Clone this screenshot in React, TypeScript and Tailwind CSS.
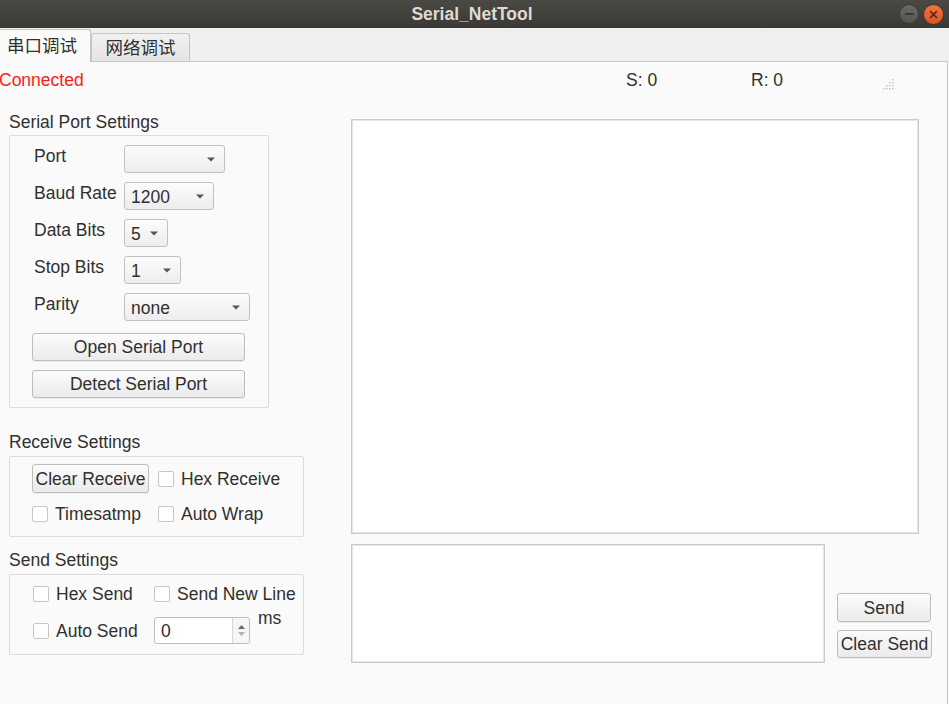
import React from 'react';

const font = "font-['Liberation_Sans','Noto_Sans_CJK_SC',sans-serif]";

function Arrow() {
  return (
    <svg width="8" height="5" viewBox="0 0 8 5">
      <path d="M0 0.5h8L4 4.5z" fill="#555555" />
    </svg>
  );
}

function Combo({ value, className }: { value?: string; className: string }) {
  return (
    <div
      className={`h-[28px] rounded-[3px] border border-[#c1c1c1] bg-gradient-to-b from-[#fcfcfc] to-[#ededed] flex items-center justify-between pl-[6px] pr-[9px] shrink-0 ${className}`}
    >
      <span className="leading-[22px] pt-[2px]">{value}</span>
      <Arrow />
    </div>
  );
}

function Btn({ label, className }: { label: string; className: string }) {
  return (
    <div
      className={`rounded-[3px] border border-[#bdbdbd] bg-gradient-to-b from-[#fbfbfb] to-[#ebebeb] flex items-center justify-center whitespace-nowrap leading-[22px] shadow-[0_1px_0_rgba(0,0,0,0.06)] ${className}`}
    >
      {label}
    </div>
  );
}

function Check({ label }: { label: string }) {
  return (
    <div className="flex items-center h-[22px] whitespace-nowrap">
      <div className="w-[16px] h-[16px] rounded-[2px] border border-[#c6c6c6] bg-white shrink-0" />
      <span className="ml-[7px] leading-[22px]">{label}</span>
    </div>
  );
}

function Row({ label, children }: { label: string; children: React.ReactNode }) {
  return (
    <div className="flex items-start">
      <span className="w-[90px] leading-[22px] whitespace-nowrap">{label}</span>
      {children}
    </div>
  );
}

function SizeGrip() {
  const dots: [number, number][] = [
    [9, 0],
    [9, 3], [6, 3],
    [9, 6], [6, 6], [3, 6],
    [9, 9], [6, 9], [3, 9], [0, 9],
  ];
  return (
    <svg width="11" height="11" viewBox="0 0 11 11">
      {dots.map(([x, y], i) => (
        <rect key={i} x={x} y={y} width="1.5" height="1.5" fill="#c2c2c2" />
      ))}
    </svg>
  );
}

export default function App() {
  return (
    <div className={`w-[949px] h-[704px] overflow-hidden flex flex-col bg-[#fafafa] text-[17.5px] text-[#303030] ${font}`}>
      {/* TITLE BAR */}
      <div className="h-[28px] shrink-0 bg-gradient-to-b from-[#4a4944] to-[#3a3935] flex items-center">
        <div className="flex-1" />
        <span className="font-bold text-[#dfdbd2] leading-[22px]">Serial_NetTool</span>
        <div className="flex-1 flex justify-end items-center gap-[4px] pr-[5px]">
          <div className="w-[20px] h-[20px] rounded-full bg-gradient-to-b from-[#6a6964] to-[#55544f] border border-[#3a3935] flex items-center justify-center">
            <div className="w-[9px] h-[2px] bg-[#3b3a36] rounded-full" />
          </div>
          <div className="w-[21px] h-[21px] rounded-full bg-gradient-to-b from-[#f3733f] to-[#e0501c] border border-[#3a3935] flex items-center justify-center">
            <svg width="9" height="9" viewBox="0 0 9 9">
              <path d="M1.5 1.5l6 6M7.5 1.5l-6 6" stroke="#4a2a1a" strokeWidth="1.6" strokeLinecap="round" />
            </svg>
          </div>
        </div>
      </div>

      {/* TABS */}
      <div className="h-[33px] shrink-0 bg-[#efefef] flex items-end relative z-10">
        <div className="w-[91px] h-[33px] -mb-px bg-[#fafafa] border-t border-r border-[#c4c4c4] rounded-tr-[3px] flex items-center pl-[7px] pb-[1px] leading-[22px]">
          串口调试
        </div>
        <div className="w-[99px] h-[28px] bg-gradient-to-b from-[#f1f1f1] to-[#e4e4e4] border border-b-0 border-[#c4c4c4] rounded-t-[3px] flex items-center justify-center leading-[22px]">
          网络调试
        </div>
      </div>

      {/* CONTENT PANE */}
      <div className="flex-1 w-[948px] border-t border-r border-[#c8c8c8] flex flex-col">
        <div className="h-[36px] flex items-center">
          <span className="w-[627px] -ml-[1px] text-[#ff1a1a] leading-[22px]">Connected</span>
          <span className="w-[125px] leading-[22px]">S: 0</span>
          <span className="w-[132px] leading-[22px]">R: 0</span>
          <div className="mt-[8px]">
            <SizeGrip />
          </div>
        </div>

        <div className="flex">
          {/* LEFT COLUMN */}
          <div className="w-[351px] shrink-0 pl-[9px] pt-[13px] flex flex-col">
            <span className="leading-[22px]">Serial Port Settings</span>
            <div className="mt-[2px] w-[260px] border border-[#dcdcdc] rounded-[2px] pt-[9px] pb-[9px] pl-[24px] flex flex-col gap-[9px]">
              <Row label="Port">
                <Combo className="w-[101px]" />
              </Row>
              <Row label="Baud Rate">
                <Combo value="1200" className="w-[90px]" />
              </Row>
              <Row label="Data Bits">
                <Combo value="5" className="w-[44px]" />
              </Row>
              <Row label="Stop Bits">
                <Combo value="1" className="w-[57px]" />
              </Row>
              <Row label="Parity">
                <Combo value="none" className="w-[126px]" />
              </Row>
              <div className="mt-[3px] -ml-[2px] flex flex-col gap-[9px]">
                <Btn label="Open Serial Port" className="w-[213px] h-[28px]" />
                <Btn label="Detect Serial Port" className="w-[213px] h-[28px]" />
              </div>
            </div>

            <span className="mt-[23px] leading-[22px]">Receive Settings</span>
            <div className="mt-[3px] w-[295px] border border-[#dcdcdc] rounded-[2px] pt-[7px] pb-[11px] pl-[22px] grid grid-cols-[126px_auto] items-center gap-y-[10px]">
              <Btn label="Clear Receive" className="w-[117px] h-[29px]" />
              <Check label="Hex Receive" />
              <Check label="Timesatmp" />
              <Check label="Auto Wrap" />
            </div>

            <span className="mt-[12px] leading-[22px]">Send Settings</span>
            <div className="mt-[3px] w-[295px] border border-[#dcdcdc] rounded-[2px] pt-[8px] pb-[10px] pl-[23px] grid grid-cols-[121px_auto] items-center gap-y-[12px]">
              <Check label="Hex Send" />
              <Check label="Send New Line" />
              <Check label="Auto Send" />
              <div className="flex items-start">
                <div className="w-[96px] h-[27px] rounded-[3px] border border-[#bdbdbd] bg-white flex">
                  <span className="flex-1 pl-[6px] leading-[25px] pt-[1px]">0</span>
                  <div className="w-[17px] border-l border-[#d6d6d6] bg-[#f6f6f6] rounded-r-[3px] flex flex-col items-center justify-center gap-[3px]">
                    <svg width="7" height="4" viewBox="0 0 7 4">
                      <path d="M0 4h7L3.5 0z" fill="#6a6a6a" />
                    </svg>
                    <svg width="7" height="4" viewBox="0 0 7 4">
                      <path d="M0 0h7L3.5 4z" fill="#b0b0b0" />
                    </svg>
                  </div>
                </div>
                <span className="ml-[8px] -mt-[10px] leading-[22px]">ms</span>
              </div>
            </div>
          </div>

          {/* RIGHT COLUMN */}
          <div className="flex-1 pt-[21px] flex flex-col">
            <div className="w-[568px] h-[415px] bg-white border border-[#cbcbcb] shadow-[inset_0_0_0_1px_#e6e6e6]" />
            <div className="mt-[10px] flex">
              <div className="w-[474px] h-[119px] bg-white border border-[#cbcbcb] shadow-[inset_0_0_0_1px_#e6e6e6]" />
              <div className="ml-[12px] flex flex-col justify-end gap-[8px] pb-[5px]">
                <Btn label="Send" className="w-[94px] h-[29px]" />
                <Btn label="Clear Send" className="w-[95px] h-[28px]" />
              </div>
            </div>
          </div>
        </div>
      </div>
    </div>
  );
}
